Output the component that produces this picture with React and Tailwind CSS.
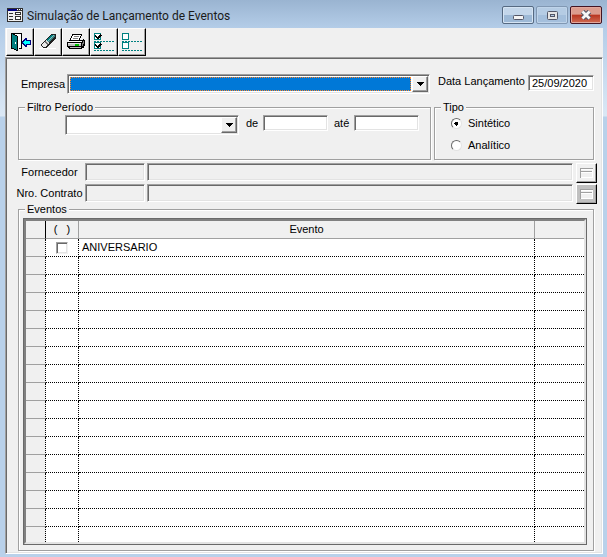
import React from 'react';

const sunken = 'border border-t-[#a0a0a0] border-l-[#a0a0a0] border-r-white border-b-white shadow-[inset_1px_1px_0_#696969,inset_-1px_-1px_0_#e3e3e3]';

const DoorIcon = () => (
  <svg viewBox="0 0 22 22" className="w-[22px] h-[22px]" shapeRendering="crispEdges">
    <path d="M3 2H12V17H8V5Z" fill="#fff" />
    <path d="M3 2H13V18H10V17H12V3H3Z" fill="#000" />
    <path d="M2 2H4V3H6V4H8V5H9V20H7V19H5V18H2Z" fill="#000" />
    <path d="M3 3H4V4H6V5H8V19H7V18H5V17H3Z" fill="#008080" />
    <path d="M6 11H7V13H6Z" fill="#fff" />
    <path d="M13 10H14V9H15V8H16V7H18V9H22V14H18V16H16V15H15V14H14V13H13Z" fill="#000080" />
    <path d="M14 11H15V10H16V9H17V10H21V13H17V14H16V13H15V12H14Z" fill="#00ffff" />
  </svg>
);

const EraserIcon = () => (
  <svg viewBox="0 0 22 22" className="w-[22px] h-[22px]" shapeRendering="crispEdges">
    <path d="M2 17H19V18H2Z" fill="#fff" />
    <path d="M14 3H18L19 4V7L9 17H6L4 15V13Z" fill="#202020" />
    <path d="M14 4H16L10 10L9 9Z" fill="#008080" />
    <path d="M16 4H17L11 11L10 10Z" fill="#80c0c0" />
    <path d="M17 4L18 5L13 11L11 11Z" fill="#408080" />
    <path d="M8 10L9 9L12 12L11 13Z" fill="#d8d8d8" />
    <path d="M7 11L8 10L12 13L10 14Z" fill="#707070" />
    <path d="M6 12L7 11L10 14L8 16H6L5 14Z" fill="#e8e8e8" />
  </svg>
);

const PrinterIcon = () => (
  <svg viewBox="0 0 22 22" className="w-[22px] h-[22px]" shapeRendering="crispEdges">
    <path d="M7 3H17V5H16V7H15V9H5V7H6V5H7Z" fill="#000" />
    <path d="M8 4H16V5H15V7H14V9H6V7H7V5H8Z" fill="#fff" />
    <path d="M9 5H14V6H9ZM8 7H13V8H8Z" fill="#808080" />
    <path d="M4 9H18V8H19V9H20V15H19V17H17V18H4V17H3V16H2V11H3V10H4Z" fill="#000" />
    <path d="M4 10H17V11H3V10Z" fill="#fff" />
    <path d="M3 12H16V15H3Z" fill="#c0c0c0" />
    <path d="M3 12H16V13H3Z" fill="#e8e8e8" />
    <path d="M10 13H14V15H10Z" fill="#00c000" />
    <path d="M5 16H16V17H5Z" fill="#c0c0c0" />
    <path d="M17 12H18V15H17ZM18 10H19V13H18Z" fill="#808080" />
  </svg>
);

const ListIcon = ({ checked }) => (
  <svg viewBox="0 0 22 22" className="w-[22px] h-[22px]" shapeRendering="crispEdges">
    {[0, 9].map((y) => (
      <g key={y} transform={`translate(0 ${y})`}>
        <path d="M1 2H8V9H1Z" fill="#008080" />
        <path d="M2 3H7V8H2Z" fill="#fff" />
        {checked && <path d="M2 4H3V5H4V6H5V5H6V4H7V3H8V4H9V5H8V6H7V7H6V8H4V7H3V6H2Z" fill="#000" />}
        <path d="M1 10.5H22" stroke="#008080" strokeDasharray="2 1" />
      </g>
    ))}
  </svg>
);

const toolbar = [
  { label: 'Sair', icon: <DoorIcon /> },
  { label: 'Limpar', icon: <EraserIcon /> },
  { label: 'Imprimir', icon: <PrinterIcon /> },
  { label: 'Marcar todos', icon: <ListIcon checked /> },
  { label: 'Desmarcar todos', icon: <ListIcon /> },
];

const DropArrow = () => (
  <span className="w-4 shrink-0 flex items-center justify-center bg-[#f0f0f0] border border-t-white border-l-white border-r-[#696969] border-b-[#696969] shadow-[inset_-1px_-1px_0_#a0a0a0] pointer-events-none">
    <svg viewBox="0 0 7 4" className="w-[7px] h-1" shapeRendering="crispEdges">
      <path d="M0 0H7V1H6V2H5V3H4V4H3V3H2V2H1V1H0Z" fill="#000" />
    </svg>
  </span>
);

const Group = ({ title, className, children }) => (
  <fieldset className={`min-w-0 border border-[#a0a0a0] shadow-[inset_1px_1px_0_#fff,1px_1px_0_#fff] ${className}`}>
    <legend className="ml-1.5 px-0.5 leading-[10px] bg-[#f0f0f0]">{title}</legend>
    {children}
  </fieldset>
);

const LookupRow = ({ id, label, pressed }) => (
  <div className="flex items-start h-5">
    <label htmlFor={id} className="w-[67px] shrink-0 leading-[18px] flex justify-center whitespace-nowrap pr-1">{label}</label>
    <input id={id} disabled className={`w-[60px] h-[18px] bg-[#f0f0f0] ${sunken}`} />
    <input disabled aria-label={`${label} descrição`} className={`ml-0.5 flex-1 min-w-0 h-[18px] bg-[#f0f0f0] ${sunken}`} />
    <button
      aria-label={`Buscar ${label}`}
      className={`ml-[3px] w-[21px] h-5 flex items-center justify-center border border-t-white border-l-white border-r-black border-b-black shadow-[inset_-1px_-1px_0_#a0a0a0] ${pressed ? 'bg-[#c0c0c0]' : 'bg-[#f0f0f0]'}`}
    >
      <svg viewBox="0 0 13 10" className="w-[13px] h-2.5" shapeRendering="crispEdges">
        <path d="M0 0H13V10H0Z" fill="#f0f0f0" />
        <path d="M0 0H13V1H1V3H12V4H1V10H0Z" fill="#a0a0a0" />
        <path d="M1 1H13V2H1ZM1 4H12V5H1ZM12 1H13V10H12ZM1 9H13V10H1Z" fill="#fff" />
      </svg>
    </button>
  </div>
);

const rows = ['ANIVERSARIO', ...Array(16).fill('')];

const TitleBar = () => (
  <div className="h-7 flex items-center pl-0.5 pr-px">
    <svg viewBox="0 0 16 14" className="w-4 h-3.5 mt-0.5" shapeRendering="crispEdges">
      <path d="M0 0H16V14H0Z" fill="#303030" />
      <path d="M1 3H15V13H1Z" fill="#f0f0f0" />
      <path d="M1 1H10V3H1Z" fill="#000080" />
      <path d="M10 1H11V2H10ZM12 1H13V2H12ZM14 1H15V2H14Z" fill="#fff" />
      <path d="M2 5H6V6H2ZM2 8H6V9H2ZM2 11H6V12H2ZM8 4H14V7H8ZM8 8H14V12H8Z" fill="#303030" />
      <path d="M9 5H13V6H9ZM9 9H13V11H9Z" fill="#fff" />
    </svg>
    <h1 className="ml-1 mt-1 flex-1 text-xs leading-4 font-[Roboto,sans-serif] text-[#1a1a1a] whitespace-nowrap">Simulação de Lançamento de Eventos</h1>
    <div className="flex gap-0.5">
      <button aria-label="Minimizar" className="w-8 h-[18px] mt-0.5 flex items-center justify-center rounded-xs border border-[#566a82] bg-linear-to-b from-[#c3d6ea] from-50% to-[#9db9d6] to-50% shadow-[inset_0_0_0_1px_#d5e4f3]">
        <svg viewBox="0 0 11 5" className="w-[11px] h-[5px] mt-1">
          <rect x=".5" y=".5" width="10" height="4" rx="1" fill="#f4f4f4" stroke="#535666" />
        </svg>
      </button>
      <button aria-label="Maximizar" className="w-8 h-[18px] mt-0.5 flex items-center justify-center rounded-xs border border-[#8198b3] bg-linear-to-b from-[#b5cce4] from-50% to-[#a4bfdc] to-50% shadow-[inset_0_0_0_1px_#bfd4ea]">
        <svg viewBox="0 0 11 9" className="w-[11px] h-[9px]">
          <rect x=".5" y=".5" width="10" height="8" rx="1" fill="#e4e4e4" stroke="#535666" />
          <rect x="3.5" y="3.5" width="4" height="2" fill="#b5cce4" stroke="#535666" />
        </svg>
      </button>
      <button aria-label="Fechar" className="w-8 h-[18px] mt-0.5 flex items-center justify-center rounded-xs border border-[#431422] bg-linear-to-b from-[#dc9c8e] from-45% via-[#b8341f] via-50% to-[#cf6a52] shadow-[inset_0_0_0_1px_#e2a79c]">
        <svg viewBox="0 0 12 10" className="w-3 h-2.5">
          <path d="M2.5 1.5L9.5 8.5M9.5 1.5L2.5 8.5" stroke="#535666" strokeWidth="4.8" />
          <path d="M2.4 1.4L9.6 8.6M9.6 1.4L2.4 8.6" stroke="#f6f6f6" strokeWidth="2.8" />
        </svg>
      </button>
    </div>
  </div>
);

export default function App() {
  return (
    <div className="min-h-screen flex flex-col pl-[5px] pr-1 pb-[5px] text-[11px] text-black font-['Liberation_Sans',Arial,sans-serif] bg-[#b9d1ea] bg-[linear-gradient(#9ab4d1_0,#b4cde8_28px,#dbe8f5_116px,#b9d1ea_117px)]">
      <TitleBar />

      <main className="flex-1 flex flex-col bg-[#f0f0f0]">
        <div className="flex pl-px h-7">
          {toolbar.map((t) => (
            <button
              key={t.label}
              aria-label={t.label}
              className="w-7 h-7 flex items-center justify-center bg-[#f0f0f0] border border-t-white border-l-white border-r-black border-b-black shadow-[inset_-1px_-1px_0_#a0a0a0]"
            >
              {t.icon}
            </button>
          ))}
        </div>

        <div className={`mt-px flex-1 flex flex-col pt-4 pl-3 pr-[5px] pb-px ${sunken}`}>
          {/* Empresa / data */}
          <div className="flex items-start mr-[3px]">
            <label htmlFor="empresa" className="w-[49px] shrink-0 pl-[3px] leading-5">Empresa</label>
            <div className={`flex-1 min-w-0 h-5 p-px flex bg-white ${sunken}`}>
              <select id="empresa" className="flex-1 min-w-0 m-px appearance-none bg-[#0078d7] border border-dotted border-[#ff8728] outline-none">
                <option></option>
              </select>
              <DropArrow />
            </div>
            <label htmlFor="data" className="ml-2 w-[90px] shrink-0 leading-[15px] whitespace-nowrap">Data Lançamento</label>
            <input id="data" defaultValue="25/09/2020" className={`mt-px w-[66px] h-4 pl-[3px] bg-white ${sunken}`} />
          </div>

          {/* Filtros */}
          <div className="mt-2 mr-[3px] flex gap-[3px] h-[58px]">
            <Group title="Filtro Período" className="flex-1">
              <div className="pl-[46px] pt-[3px] flex items-start">
                <div className={`w-[174px] h-5 p-px flex bg-white ${sunken}`}>
                  <select aria-label="Período" className="flex-1 min-w-0 appearance-none outline-none">
                    <option></option>
                  </select>
                  <DropArrow />
                </div>
                <label htmlFor="de" className="ml-[7px] w-[17px] leading-4">de</label>
                <input id="de" className={`w-[65px] h-4 bg-white ${sunken}`} />
                <label htmlFor="ate" className="ml-1.5 w-5 leading-4">até</label>
                <input id="ate" className={`w-[65px] h-4 bg-white ${sunken}`} />
              </div>
            </Group>
            <Group title="Tipo" className="w-40">
              {['Sintético', 'Analítico'].map((t, i) => (
                <label key={t} className="h-[22px] pl-4 flex items-center gap-1.5">
                  <input
                    type="radio"
                    name="tipo"
                    defaultChecked={i === 0}
                    className="appearance-none w-[11px] h-[11px] rounded-full bg-white border border-t-[#696969] border-l-[#696969] border-r-[#e3e3e3] border-b-[#e3e3e3] checked:bg-[radial-gradient(#000_0_2px,#fff_2px)]"
                  />
                  {t}
                </label>
              ))}
            </Group>
          </div>

          <div className="mt-[3px] flex flex-col gap-px">
            <LookupRow id="fornecedor" label="Fornecedor" />
            <LookupRow id="contrato" label="Nro. Contrato" pressed />
          </div>

          <Group title="Eventos" className="mr-[3px] mb-px flex-1">
            <div className="pt-1 pl-1 pr-1.5 pb-[5px]">
              <div className="border border-[#696969] bg-white">
                <div className="border-2 border-t-[#808080] border-l-[#808080] border-r-[#e3e3e3] border-b-[#e3e3e3]">
                  <table className="w-full table-fixed border-separate border-spacing-0">
                    <colgroup>
                      <col className="w-5" />
                      <col className="w-[33px]" />
                      <col />
                      <col className="w-[49px]" />
                    </colgroup>
                    <thead>
                      <tr className="h-[18px] bg-[#f0f0f0]">
                        <th className="p-0 border-b border-b-[#a0a0a0] border-r border-r-black"></th>
                        <th className="p-0 border-b border-r border-[#a0a0a0] font-normal leading-[17px] whitespace-pre">{'(   )'}</th>
                        <th className="p-0 border-b border-r border-[#a0a0a0] font-normal leading-[17px]">Evento</th>
                        <th className="p-0 border-b border-[#a0a0a0]"></th>
                      </tr>
                    </thead>
                    <tbody>
                      {rows.map((name, i) => (
                        <tr key={i} className="h-[18px] last:h-[15px] group">
                          <td className="p-0 bg-[#f0f0f0] border-b border-b-[#a0a0a0] border-r border-r-black [border-right-style:dotted] group-last:border-b-0"></td>
                          <td className="p-0 border-b border-r border-dotted border-black group-last:border-b-0">
                            {name && (
                              <input
                                type="checkbox"
                                aria-label={name}
                                className="block mx-auto appearance-none w-3 h-3 bg-white border border-t-[#a0a0a0] border-l-[#a0a0a0] border-r-[#f0f0f0] border-b-[#f0f0f0] shadow-[inset_1px_1px_0_#696969,inset_-1px_-1px_0_#e3e3e3]"
                              />
                            )}
                          </td>
                          <td className="p-0 pl-[3px] leading-[17px] border-b border-r border-dotted border-black group-last:border-b-0">{name}</td>
                          <td className="p-0 border-b border-dotted border-black group-last:border-b-0"></td>
                        </tr>
                      ))}
                    </tbody>
                  </table>
                </div>
              </div>
            </div>
          </Group>
        </div>
      </main>
    </div>
  );
}
